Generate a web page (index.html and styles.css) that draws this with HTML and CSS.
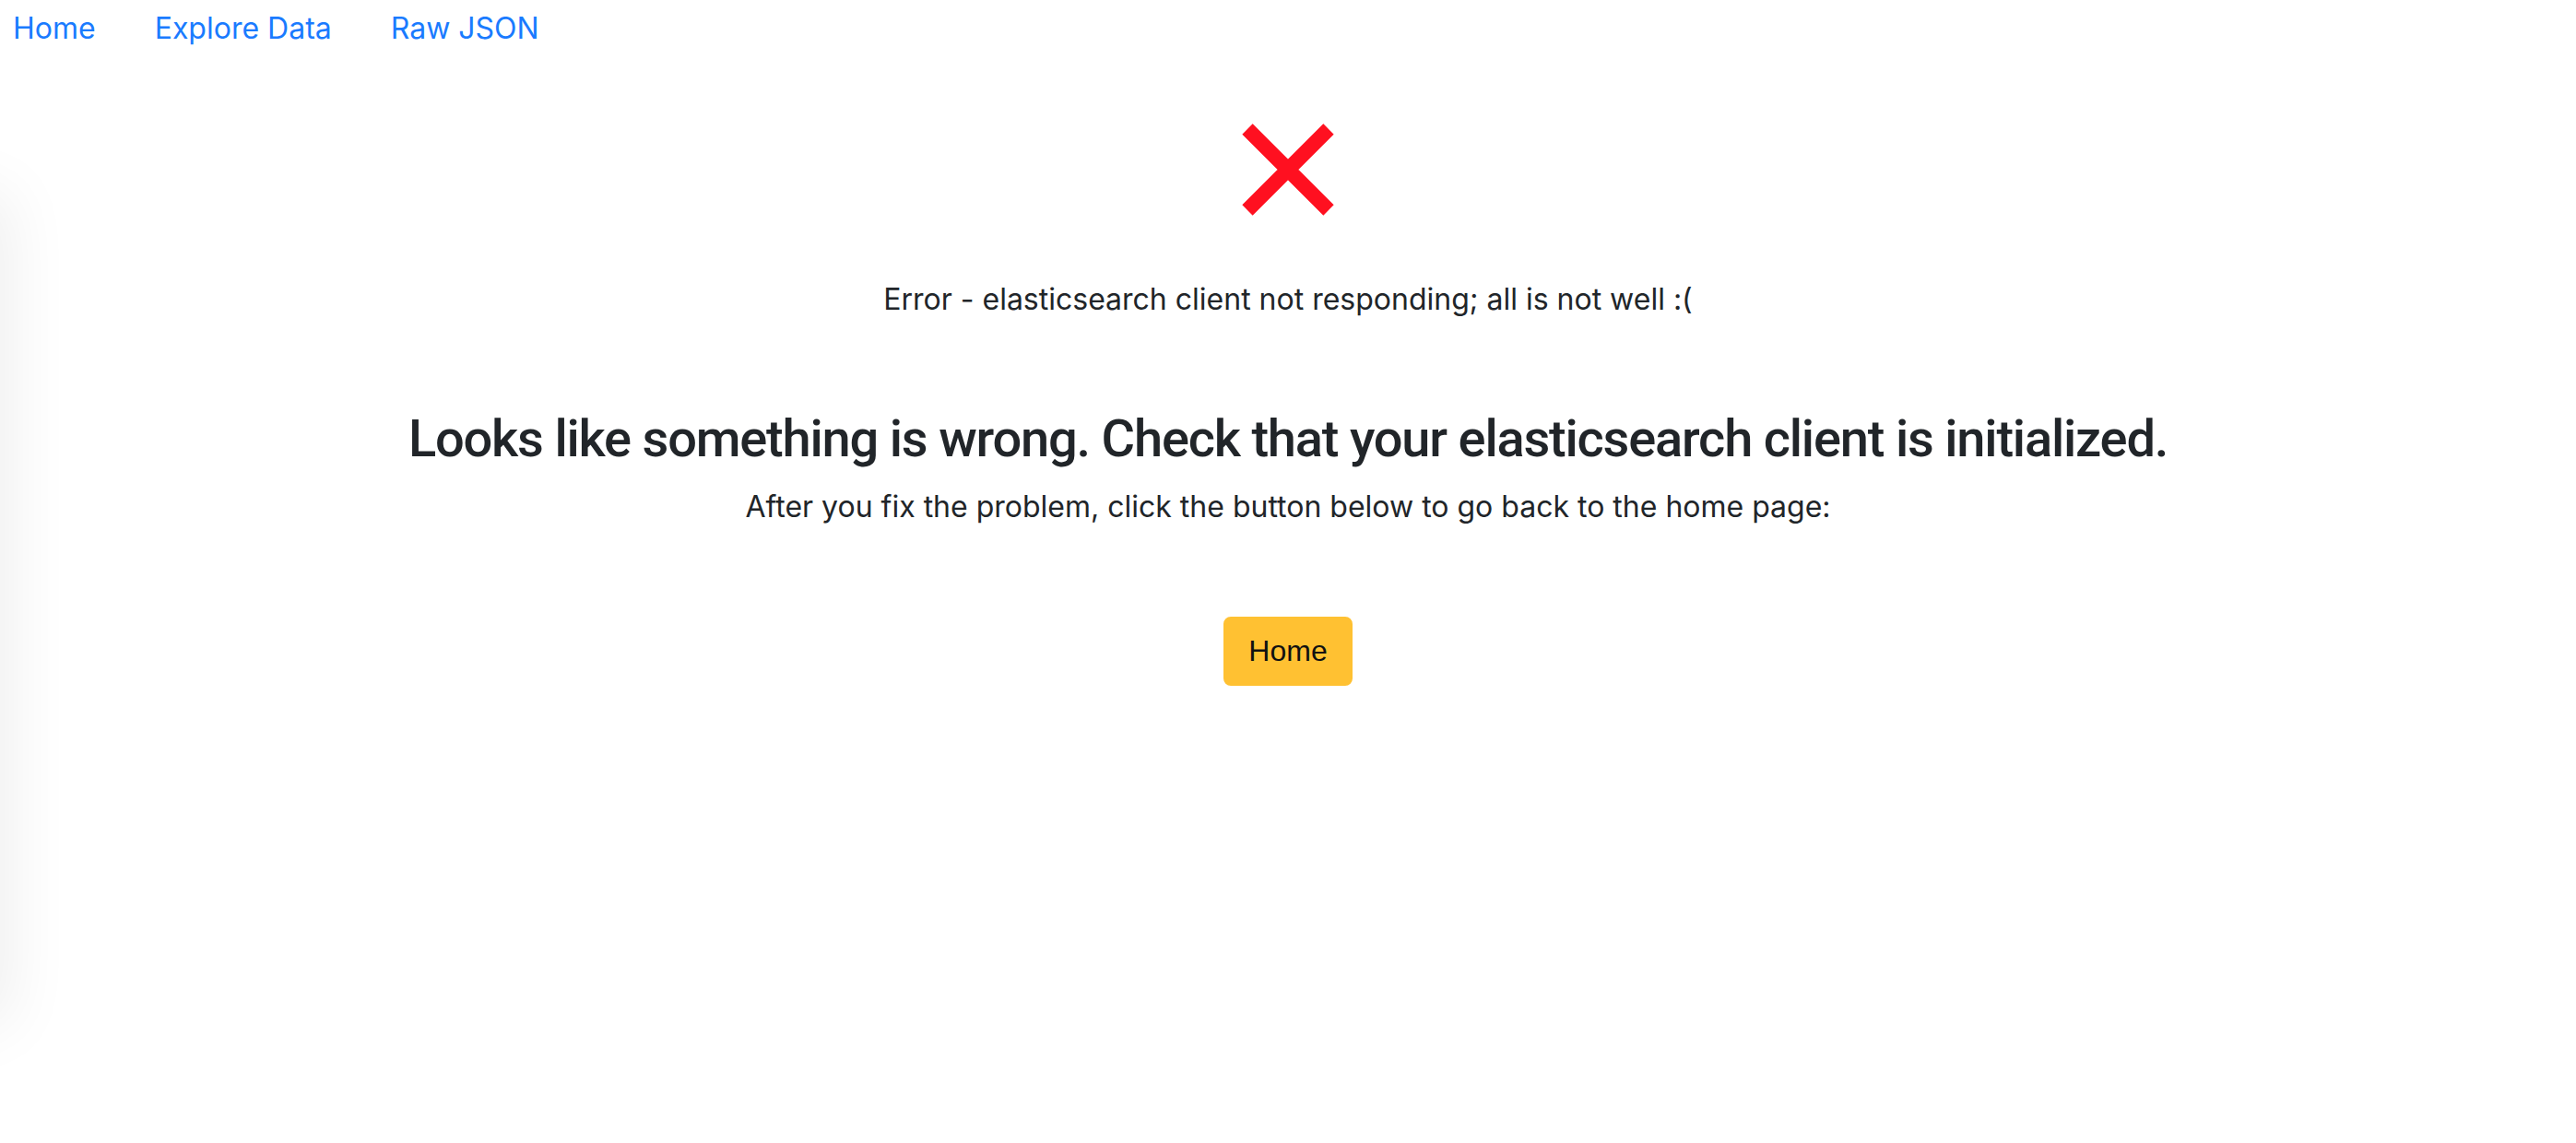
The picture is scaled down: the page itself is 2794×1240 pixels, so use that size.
FILE: index.html
```html
<!DOCTYPE html>
<html lang="en">
<head>
<meta charset="utf-8">
<title>Error</title>
<link rel="stylesheet" href="styles.css">
</head>
<body>
<div class="edge-shadow"></div>
<nav class="topnav">
  <a class="nav-link" href="#">Home</a>
  <a class="nav-link" href="#">Explore Data</a>
  <a class="nav-link" href="#">Raw JSON</a>
</nav>
<main class="error-page">
  <svg class="error-icon" width="100" height="100" viewBox="0 0 100 100" aria-hidden="true">
    <path d="M6 6 L94 94 M94 6 L6 94" stroke="#ff1020" stroke-width="16" stroke-linecap="butt" fill="none"/>
  </svg>
  <p class="error-msg">Error - elasticsearch client not responding; all is not well :(</p>
  <h3 class="headline">Looks like something is wrong. Check that your elasticsearch client is initialized.</h3>
  <p class="hint">After you fix the problem, click the button below to go back to the home page:</p>
  <a class="btn-home" href="#">Home</a>
</main>
</body>
</html>
```
FILE: styles.css
```css
html, body {
  margin: 0;
  padding: 0;
  background: #ffffff;
}
body {
  font-family: Inter, "Noto Sans", "Liberation Sans", sans-serif;
  font-size: 32px;
  line-height: 48px;
  color: #212529;
  overflow: hidden;
  height: 1240px;
}
.edge-shadow {
  position: fixed;
  left: -120px;
  top: 220px;
  width: 120px;
  height: 880px;
  box-shadow: 0 0 70px 10px rgba(0, 0, 0, 0.07);
  background: #fff;
}
.topnav {
  display: flex;
  gap: 64px;
  padding: 7px 14px 0;
}
.nav-link {
  color: #1a7bff;
  text-decoration: none;
}
.error-page {
  display: flex;
  flex-direction: column;
  align-items: center;
  text-align: center;
}
.error-icon {
  display: block;
  margin-top: 79px;
}
.error-msg {
  margin: 67px 0 0;
}
.headline {
  margin: 94px 0 0;
  font-family: Roboto, Inter, "Liberation Sans", sans-serif;
  font-size: 56px;
  line-height: 67px;
  font-weight: 500;
  letter-spacing: -1.2px;
}
.hint {
  margin: 16px 0 0;
}
.btn-home {
  margin-top: 95px;
  display: inline-block;
  box-sizing: border-box;
  width: 140px;
  height: 75px;
  line-height: 71px;
  border: 2px solid #ffc132;
  border-radius: 8px;
  background: #ffc132;
  color: #111111;
  font-family: "Liberation Sans", Arial, sans-serif;
  text-decoration: none;
}
```
